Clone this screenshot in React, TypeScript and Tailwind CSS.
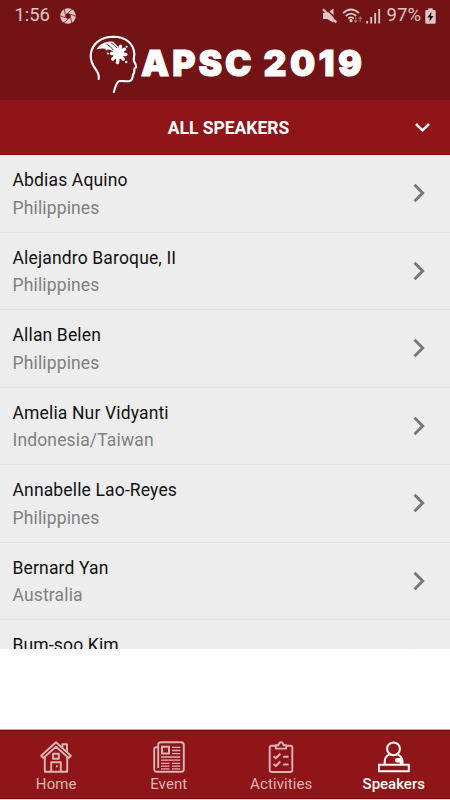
// Conference app — speakers tab with the list of all speakers.

import { useState } from 'react'

interface Speaker {
  name: string
  country?: string
}

const SPEAKERS: Speaker[] = [
  { name: 'Abdias Aquino', country: 'Philippines' },
  { name: 'Alejandro Baroque, II', country: 'Philippines' },
  { name: 'Allan Belen', country: 'Philippines' },
  { name: 'Amelia Nur Vidyanti', country: 'Indonesia/Taiwan' },
  { name: 'Annabelle Lao-Reyes', country: 'Philippines' },
  { name: 'Bernard Yan', country: 'Australia' },
  { name: 'Bum-soo Kim' },
]

function ShutterIcon() {
  return (
    <svg width="16" height="16" viewBox="0 0 16 16" className="text-[#e1c4c5]">
      <circle cx="8" cy="8" r="7.8" fill="currentColor" />
      <path d="M8 4.8 10.8 6.4V9.6L8 11.2 5.2 9.6V6.4Z" fill="#721416" />
      <path
        d="M8 4.8 12.2 1.2M10.8 6.4 15.8 8.2M10.8 9.6 11.6 15M8 11.2 3.8 14.8M5.2 9.6.2 7.8M5.2 6.4 4.4 1"
        stroke="#721416"
        strokeWidth="0.8"
      />
    </svg>
  )
}

function MutedIcon() {
  return (
    <svg width="16" height="16" viewBox="0 0 16 16" className="text-[#e1c4c5]">
      <path d="M1 5H5.2L11.5.5V14.8L5.2 11H1Z" fill="currentColor" />
      <path d="M3-.2 16.2 13" stroke="#721416" strokeWidth="1.4" />
      <path d="M1 1.2 14.4 14.5" stroke="currentColor" strokeWidth="2.1" />
    </svg>
  )
}

function WifiIcon() {
  return (
    <svg width="21" height="16" viewBox="0 0 21 16" fill="none" className="text-[#e1c4c5]">
      <path d="M1 5.2Q9 -2.3 17 5.2M3.8 8Q9 3.2 14.2 8M6.3 10.5Q9 8.3 11.7 10.5" stroke="currentColor" strokeWidth="1.8" />
      <circle cx="9" cy="12.7" r="1.6" fill="currentColor" />
      <path d="M13.7 9.2V14M12.1 12.4 13.7 14.2 15.3 12.4M18.2 14V9.2M16.6 10.8 18.2 9 19.8 10.8" stroke="#a66b6d" strokeWidth="1.1" />
    </svg>
  )
}

function SignalIcon() {
  return (
    <svg width="15" height="16" viewBox="0 0 15 16" className="text-[#e1c4c5]">
      <path d="M1.2 13V15.4M5.2 9V15.4M9.2 5V15.4M13.2 1V15.4" stroke="currentColor" strokeWidth="1.8" />
    </svg>
  )
}

function BatteryIcon() {
  return (
    <svg width="11" height="16" viewBox="0 0 11 16">
      <path d="M3.3.3H7.7V2H9.5Q10.7 2 10.7 3.2V14.5Q10.7 15.7 9.5 15.7H1.5Q.3 15.7.3 14.5V3.2Q.3 2 1.5 2H3.3Z" fill="#e1c4c5" />
      <path d="M6.5 3.8 2.4 9.4H5L4.2 13.8 8.5 7.9H5.9Z" fill="#141010" />
    </svg>
  )
}

// Head in profile with a flower for the brain
function LogoMark() {
  return (
    <svg width="50" height="60" viewBox="0 0 50 60" fill="none">
      <path
        d="M9.7 44C10.1 40.5 9.5 38 7.2 35C3.8 30.5 1.5 26.5 1.7 20.5C2.2 9 11.5 1.9 24.5 1.8C37 2 44.5 8.5 45.3 18.5C45.5 21 44.5 23 44.8 25.3C45.3 27.8 47.6 30.3 47.2 32C46.8 33 45.2 33 45.3 34.3C45.3 36 45.6 36.6 45 38C44.5 38.8 44.1 39 43.9 40.3C43.7 43.2 43.2 45.7 40.2 46.2C36.5 46.7 33.4 45.4 29.7 46.2C26.7 48.6 26.4 52.5 24.8 57"
        stroke="white"
        strokeWidth="2.1"
        strokeLinecap="round"
        strokeLinejoin="round"
      />
      <path d="M7.5 14.2C11 8.5 18 5.8 24.2 6.7L30 12.8 25.5 17.3C20 13.8 14 12.8 7.5 14.2Z" fill="white" />
      <path d="M17.5 9.2Q21 10.5 24.5 15.2M22 7.9Q25.5 9.7 28.5 13.5" stroke="#721416" strokeWidth="0.9" />
      <g stroke="white" strokeWidth="3.4" strokeLinecap="round">
        <path d="M29.5 18.5 31.5 11.5M29.5 18.5 35.5 14.2M29.5 18.5 36.8 19.5M29.5 18.5 34.3 24.2M29.5 18.5 28.5 27.5M29.5 18.5 23.8 24M29.5 18.5H22.5" />
      </g>
      <circle cx="29.5" cy="18.5" r="5.4" fill="white" />
      <circle cx="17.5" cy="14.5" r="1" fill="white" />
      <circle cx="19" cy="18.5" r="1.1" fill="white" />
      <circle cx="37.6" cy="11.7" r="1" fill="white" />
      <circle cx="37.2" cy="27" r="1.2" fill="white" />
    </svg>
  )
}

function HomeIcon() {
  return (
    <svg width="32" height="32" viewBox="0 0 32 32" fill="none" stroke="currentColor" strokeWidth="1.9" strokeLinejoin="round">
      <path d="M1.2 14.8 16 1.3 30.8 14.8 28.7 17 16 5.7 3.3 17Z" />
      <path d="M4.8 16V30.8H27.2V16M22.4 6.8V3.3H27V11" />
      <path d="M13 12.7H18.8V17.7H13ZM11.2 30.8V21.2H20.8V30.8" />
      <path d="M16 25.2H17.8" />
    </svg>
  )
}

function EventIcon() {
  return (
    <svg width="32" height="32" viewBox="0 0 32 32" fill="none" stroke="currentColor" strokeWidth="1.9">
      <path d="M5.2 27V3.8Q5.2 1.2 7.8 1.2H28.2Q30.8 1.2 30.8 3.8V28.2Q30.8 30.8 28.2 30.8H4.2Q1.2 30.8 1.2 27.8V8.2Q1.2 6.2 3.2 6.2H5.2V27" />
      <path d="M9 5.8H16V12.5H9Z" strokeWidth="2" />
      <path d="M19 6.3H27.3M19 9.5H27.3M19 12.7H27.3M8 16H27.3M8 19.2H27.3M8 22.4H16.5M19 22.4H27.3M8 25.2H16.5M19 25.2H27.3M8 27.8H16.5M19 27.8H27.3" strokeWidth="1.3" />
    </svg>
  )
}

function ActivitiesIcon() {
  return (
    <svg width="32" height="32" viewBox="0 0 32 32" fill="none" stroke="currentColor" strokeWidth="1.9" strokeLinejoin="round">
      <path d="M10.5 4.8H6.5Q4.7 4.8 4.7 6.6V29Q4.7 31 6.7 31H25.3Q27.3 31 27.3 29V6.6Q27.3 4.8 25.5 4.8H21.5" />
      <path d="M10.8 4.2H13.5Q14 1.2 16 1.2T18.5 4.2H21.2V7.6H10.8Z" />
      <path d="M8.5 15.2 10.8 17.2 15.3 12.7M8.5 23 10.8 25 15.3 20.5M18.2 15.7H23.5M18.2 23.5H23.5" strokeWidth="2" />
    </svg>
  )
}

function SpeakersIcon() {
  return (
    <svg width="32" height="32" viewBox="0 0 32 32" fill="none" stroke="currentColor" strokeWidth="2">
      <circle cx="15.5" cy="7.8" r="6.4" />
      <path d="M6.7 23.5V20.5Q6.7 15.5 11.5 13.3M19.5 13.3Q24 15.5 24.5 20V23.5" />
      <path d="M.8 23.8H30.8V30.3H.8Z" />
      <rect x="17" y="17" width="8" height="4.6" rx="2" fill="currentColor" stroke="none" />
      <path d="M23 20V23.5" strokeWidth="2.4" />
    </svg>
  )
}

const TABS = [
  { label: 'Home', icon: HomeIcon },
  { label: 'Event', icon: EventIcon },
  { label: 'Activities', icon: ActivitiesIcon },
  { label: 'Speakers', icon: SpeakersIcon },
]

function StatusBar() {
  return (
    <div className="flex h-[31px] items-center justify-between pl-[14.5px] pr-[14px] text-[18.5px] leading-[31px] text-[#e1c4c5]">
      <div className="flex items-center gap-[9px]">
        <span className="w-[36px] whitespace-nowrap tracking-[-0.1px]">1:56</span>
        <ShutterIcon />
      </div>
      <div className="flex items-center">
        <MutedIcon />
        <span className="ml-[4px]"><WifiIcon /></span>
        <span className="ml-[3px]"><SignalIcon /></span>
        <span className="ml-[5.5px] w-[35px] whitespace-nowrap tracking-[0.1px]">97%</span>
        <span className="ml-[3.5px]"><BatteryIcon /></span>
      </div>
    </div>
  )
}

function SpeakerRow({ speaker }: { speaker: Speaker }) {
  return (
    <div className="flex h-[77.5px] shrink-0 items-start justify-between border-b border-[#e2e2e2] pl-[12.5px] pr-[25px]">
      <div className="pt-[12px] text-[17.5px] leading-[27.5px] tracking-[0.15px]">
        <div className="text-[#111]">{speaker.name}</div>
        {speaker.country && <div className="text-[#808080]">{speaker.country}</div>}
      </div>
      <svg width="12" height="20" viewBox="0 0 12 20" fill="none" className="mt-[28px]">
        <path d="M1.5 1.8 9.7 10 1.5 18.2" stroke="#777" strokeWidth="2.9" />
      </svg>
    </div>
  )
}

export default function App() {
  const [tab, setTab] = useState('Speakers')

  return (
    <div className="flex h-[800px] w-[450px] flex-col overflow-hidden bg-white font-['Roboto',sans-serif]">
      <header className="h-[100px] shrink-0 bg-[#721416]">
        <StatusBar />
        <div className="flex pl-[89px] pt-[4px]">
          <LogoMark />
          <svg
            width="224"
            height="50"
            viewBox="0 0 224 50"
            className="ml-px fill-white stroke-white stroke-[1px] font-['Inter',sans-serif] text-[35.5px] font-black"
          >
            <text x="1" y="41" textLength="110.5" lengthAdjust="spacing">APSC</text>
            <text x="123.5" y="41" textLength="98.5" lengthAdjust="spacing">2019</text>
          </svg>
        </div>
      </header>

      <button className="grid h-[55px] shrink-0 grid-cols-[1fr_auto_1fr] items-center border-b border-[#7d080b] bg-[#8f1518] pl-[26px] pr-[19px] text-white">
        <span />
        <span className="pt-[3px] text-[17.5px] font-bold">ALL SPEAKERS</span>
        <svg width="17" height="11" viewBox="0 0 17 11" fill="none" className="justify-self-end">
          <path d="M2 2 8.5 8.3 15 2" stroke="currentColor" strokeWidth="2.5" />
        </svg>
      </button>

      <main className="flex h-[494px] shrink-0 flex-col overflow-hidden bg-[#ededed]">
        {SPEAKERS.map((s) => (
          <SpeakerRow key={s.name} speaker={s} />
        ))}
      </main>

      <div className="flex-1" />

      <div className="h-px shrink-0 bg-[#bba5a5]" />
      <nav className="grid h-[69px] shrink-0 grid-cols-4 border-y border-[#7d080b] bg-[#8f1518]">
        {TABS.map(({ label, icon: Icon }) => (
          <button
            key={label}
            onClick={() => setTab(label)}
            className={`flex flex-col items-center pt-[10px] ${tab === label ? 'font-medium text-white' : 'font-normal tracking-[0.1px] text-[#deb5b6]'}`}
          >
            <Icon />
            <span className="mt-px text-[15px] leading-[20px]">{label}</span>
          </button>
        ))}
      </nav>
      <div className="h-px shrink-0 bg-[#eadcdc]" />
    </div>
  )
}
